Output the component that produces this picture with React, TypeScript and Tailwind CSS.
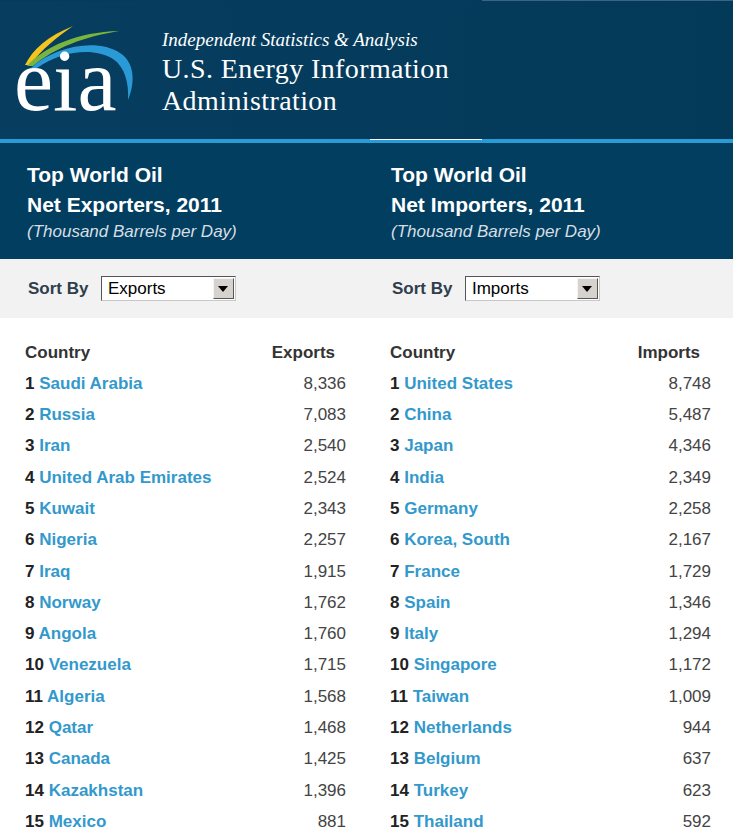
import React from "react";

const exporters: [string, string][] = [
  ["Saudi Arabia", "8,336"],
  ["Russia", "7,083"],
  ["Iran", "2,540"],
  ["United Arab Emirates", "2,524"],
  ["Kuwait", "2,343"],
  ["Nigeria", "2,257"],
  ["Iraq", "1,915"],
  ["Norway", "1,762"],
  ["Angola", "1,760"],
  ["Venezuela", "1,715"],
  ["Algeria", "1,568"],
  ["Qatar", "1,468"],
  ["Canada", "1,425"],
  ["Kazakhstan", "1,396"],
  ["Mexico", "881"],
];

const importers: [string, string][] = [
  ["United States", "8,748"],
  ["China", "5,487"],
  ["Japan", "4,346"],
  ["India", "2,349"],
  ["Germany", "2,258"],
  ["Korea, South", "2,167"],
  ["France", "1,729"],
  ["Spain", "1,346"],
  ["Italy", "1,294"],
  ["Singapore", "1,172"],
  ["Taiwan", "1,009"],
  ["Netherlands", "944"],
  ["Belgium", "637"],
  ["Turkey", "623"],
  ["Thailand", "592"],
];

function Logo() {
  return (
    <svg width="162" height="138" viewBox="0 0 162 138" className="shrink-0">
      <path d="M25,64 C33,48 48,35 73,25 C57,36 42,48 30,64 Z" fill="#f3c41e" />
      <path d="M27,65 C45,45 78,31 119,30 C84,36 56,46 33,65 Z" fill="#78b43f" />
      <path
        d="M31,67 C55,45 97,37 120,52 C134,61 136,80 128,99 C129,82 125,66 113,58 C93,46 62,50 37,67 Z"
        fill="#2a9ad6"
      />
      <text
        x="14"
        y="109"
        fill="#ffffff"
        fontSize="88"
        fontFamily="'Liberation Serif', 'Times New Roman', serif"
      >
        eia
      </text>
    </svg>
  );
}

function Select({ value }: { value: string }) {
  return (
    <div className="ml-[12.5px] flex h-[25px] w-[135px] items-center border border-t-[#555] border-l-[#555] border-b-[#c8c8c8] border-r-[#c8c8c8] bg-white">
      <span className="flex-1 pl-[6px] text-[17px] leading-none text-black">{value}</span>
      <div className="mr-[1px] flex h-[21px] w-[21px] items-center justify-center border border-t-[#f4f4f4] border-l-[#f4f4f4] border-b-[#555] border-r-[#555] bg-[#d6d3ce]">
        <svg width="10" height="6" viewBox="0 0 10 6">
          <path d="M0,0 L10,0 L5,6 Z" fill="#000" />
        </svg>
      </div>
    </div>
  );
}

function Table({ label, rows }: { label: string; rows: [string, string][] }) {
  return (
    <div className="flex flex-col">
      <div className="flex h-[31.3px] items-center justify-between leading-[31.3px] font-bold text-[#333]">
        <span>Country</span>
        <span className="pr-[11px]">{label}</span>
      </div>
      {rows.map(([name, val], i) => (
        <div key={name} className="flex h-[31.3px] items-center justify-between leading-[31.3px]">
          <span className="whitespace-nowrap">
            <span className="font-bold text-[#222]">{i + 1} </span>
            <span className="font-bold text-[#3399cc]">{name}</span>
          </span>
          <span className="text-[#444]">{val}</span>
        </div>
      ))}
    </div>
  );
}

export default function App() {
  return (
    <div
      className="h-[840px] w-[733px] overflow-hidden bg-white text-[17px]"
      style={{ fontFamily: "'Liberation Sans', Arial, sans-serif" }}
    >
      {/* top header */}
      <div className="flex h-[1px]">
        <div className="w-[482px] bg-[#053b5c]" />
        <div className="flex-1 bg-[#3a6483]" />
      </div>
      <div className="flex h-[138px] bg-gradient-to-r from-[#073d5e] to-[#033a5a]">
        <Logo />
        <div
          className="flex flex-col pt-[27px] text-white"
          style={{ fontFamily: "'Liberation Serif', 'Times New Roman', serif" }}
        >
          <div className="h-[25px] text-[19px] italic leading-[24px]">
            Independent Statistics &amp; Analysis
          </div>
          <div className="h-[32px] text-[28px] leading-[32px] tracking-[0.4px]">
            U.S. Energy Information
          </div>
          <div className="h-[32px] text-[28px] leading-[32px] tracking-[0.4px]">Administration</div>
        </div>
      </div>
      {/* stripe */}
      <div className="relative h-[4px] bg-[#2a9bd5]">
        <div className="absolute left-[370px] top-0 h-[1px] w-[112px] bg-white" />
      </div>
      {/* title band */}
      <div className="flex h-[116px] bg-[#023e60] text-white">
        <div className="w-[367px] pl-[27px] pt-[17px]">
          <div className="text-[21px] font-bold leading-[29.5px]">Top World Oil</div>
          <div className="text-[21px] font-bold leading-[29.5px]">Net Exporters, 2011</div>
          <div className="text-[17px] italic leading-[26px] text-[#d6dee4]">(Thousand Barrels per Day)</div>
        </div>
        <div className="flex-1 pl-[24px] pt-[17px]">
          <div className="text-[21px] font-bold leading-[29.5px]">Top World Oil</div>
          <div className="text-[21px] font-bold leading-[29.5px]">Net Importers, 2011</div>
          <div className="text-[17px] italic leading-[26px] text-[#d6dee4]">(Thousand Barrels per Day)</div>
        </div>
      </div>
      {/* sort row */}
      <div className="flex h-[59px] bg-[#f2f2f2]">
        <div className="flex w-[367px] items-center pl-[28px]">
          <span className="font-bold text-[#2f3e4c]">Sort By</span>
          <Select value="Exports" />
        </div>
        <div className="flex flex-1 items-center pl-[25px]">
          <span className="font-bold text-[#2f3e4c]">Sort By</span>
          <Select value="Imports" />
        </div>
      </div>
      {/* tables */}
      <div className="flex pt-[18.5px]">
        <div className="w-[367px] pl-[25px] pr-[21px]">
          <Table label="Exports" rows={exporters} />
        </div>
        <div className="flex-1 pl-[23px] pr-[22px]">
          <Table label="Imports" rows={importers} />
        </div>
      </div>
    </div>
  );
}
